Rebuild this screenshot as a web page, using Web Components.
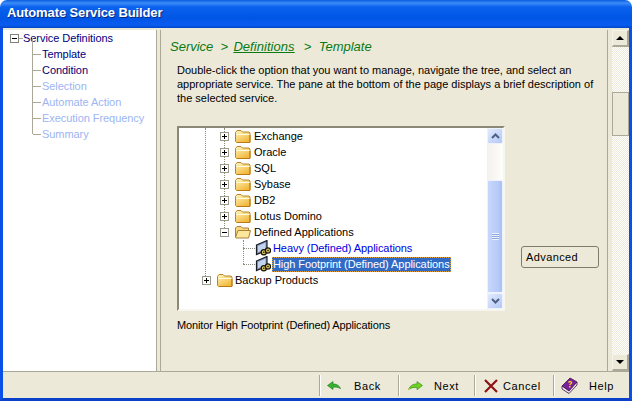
<!DOCTYPE html>
<html>
<head>
<meta charset="utf-8">
<title>Automate Service Builder</title>
<style>
  html, body { margin: 0; padding: 0; background: #fff; }
  body { width: 632px; height: 401px; overflow: hidden; font: 11px "Liberation Sans", Arial, sans-serif; }
</style>
</head>
<body>
<builder-window>
  <nav-tree slot="nav"></nav-tree>
  <wizard-pane slot="main"></wizard-pane>
  <tool-button slot="tools" icon="back" w="79" pad="7" gap="13">Back</tool-button>
  <tool-button slot="tools" icon="next" w="76" pad="9" gap="11">Next</tool-button>
  <tool-button slot="tools" icon="cancel" w="79" pad="9" gap="5">Cancel</tool-button>
  <tool-button slot="tools" icon="help" w="76" pad="7" gap="11">Help</tool-button>
</builder-window>

<script>
const ICONS = {
  back: `<svg width="14" height="10" viewBox="0 0 14 10"><path d="M6 .5 .5 4.500 6 8.500V6.300C8.500 5.800 11 6.300 13.500 7.500 12.500 4.800 9.500 2.800 6 3Z" fill="#35b52c" stroke="#1c6e1c" stroke-width=".6"/></svg>`,
  next: `<svg width="15" height="10" viewBox="0 0 15 10"><path d="M9 .5 14.500 4.500 9 8.800V6.600C6.500 6 3.500 6.600 .6 8.400 2 4.800 5 2.800 9 3Z" fill="#6ed21e" stroke="#2f7f1f" stroke-width=".6"/><path d="M.5 8.500 2 7.500" stroke="#e0c820" stroke-width="1.200"/></svg>`,
  cancel: `<svg width="14" height="14" viewBox="0 0 14 14"><path d="M1 1 13 13M13 1 1 13" stroke="#8e1414" stroke-width="2.200" fill="none"/></svg>`,
  help: `<svg width="17" height="17" viewBox="0 0 17 17"><path d="M1 9 9 1 16 5 8 14Z" fill="#7a1f9a" stroke="#3c1048" stroke-width=".8"/><path d="M1 9V12L8 16.500 16 8V5L8 14Z" fill="#e8e4f0" stroke="#3c1048" stroke-width=".8"/><path d="M7.500 5.500C8.500 4 11 4.500 10.500 6 10 7 9 7 8.800 8" stroke="#f4d21e" stroke-width="1.400" fill="none"/><rect x="8" y="9" width="1.500" height="1.500" fill="#f4d21e"/></svg>`,
  folder: `<svg width="16" height="14" viewBox="0 0 16 14"><defs><linearGradient id="f" x1="0" y1="0" x2=".6" y2="1"><stop offset="0" stop-color="#fff6c0"/><stop offset="1" stop-color="#f2b93c"/></linearGradient></defs><path d="M.5 12.500V3.500L2 1.500H6L7.500 3H14L15 4V12.500L14 13.500H1.500Z" fill="url(#f)" stroke="#b8862d"/><path d="M1.500 5.500H14.500" stroke="#fffbe0"/><path d="M2 13.500H15V6" stroke="#b97a14" fill="none"/></svg>`,
  folderOpen: `<svg width="16" height="14" viewBox="0 0 16 14"><path d="M.5 12.500V3L2 1.500H6L7.500 3H13.500V5" fill="#f7d67c" stroke="#a9813a"/><path d="M.5 12.500 3 5.500H15.500L13.500 13H1Z" fill="#fde79a" stroke="#a9813a"/></svg>`,
  app: `<svg width="16" height="16" viewBox="0 0 16 16"><path d="M1.500 5 12 .5V10L1.500 14.500Z" fill="#7f98bd" stroke="#1a1d24" stroke-width="1.200"/><path d="M3 6 10.500 2.800V9L3 12.200Z" fill="#c4d4ee"/><circle cx="8.800" cy="12.300" r="2.600" fill="#d8c060" stroke="#1a1708" stroke-width="1.200"/><circle cx="13" cy="10.500" r="2.600" fill="#d8c060" stroke="#1a1708" stroke-width="1.200"/><circle cx="8.800" cy="12.300" r=".8" fill="#1a1708"/><circle cx="13" cy="10.500" r=".8" fill="#1a1708"/></svg>`
};

class BuilderWindow extends HTMLElement {
  constructor() {
    super();
    this.attachShadow({ mode: "open" });
    this.shadowRoot.innerHTML = `
      <style>
        :host { display: flex; flex-direction: column; width: 632px; height: 401px; }
        .title {
          height: 28px; flex: none; box-sizing: border-box; padding: 0 7px 3px; display: flex; align-items: center;
          border-radius: 7px 7px 0 0; letter-spacing: -.12px;
          background: linear-gradient(180deg, #0a5ce0 0, #3c8cf8 3px, #0a62ee 7px, #0055e5 18px, #0a5cf0 25px, #0047c8 28px);
          color: #fff; font: bold 13px "Liberation Sans", Arial, sans-serif; text-shadow: 1px 1px 0 #0a2a80;
        }
        .frame { flex: 1; display: flex; flex-direction: column; min-height: 0; background: #ece9d8;
          border-left: 3px solid #0a50e8; border-right: 3px solid #0a50e8; border-bottom: 3px solid #0a3fc8; }
        .top { flex: 1; display: flex; min-height: 0; padding-top: 2px; border-bottom: 1px solid #aca899; }
        .tools { height: 26px; flex: none; display: flex; justify-content: flex-end; }
        ::slotted([slot=nav]) { flex: none; }
        ::slotted([slot=main]) { flex: 1; min-width: 0; }
      </style>
      <div class="title">Automate Service Builder</div>
      <div class="frame">
        <div class="top"><slot name="nav"></slot><slot name="main"></slot></div>
        <div class="tools"><slot name="tools"></slot></div>
      </div>`;
  }
}

class NavTree extends HTMLElement {
  constructor() {
    super();
    this.attachShadow({ mode: "open" });
    const items = [["Template", "#000080"], ["Condition", "#000078"], ["Selection", "#9db5f2"],
      ["Automate Action", "#9db5f2"], ["Execution Frequency", "#9db5f2"], ["Summary", "#9db5f2"]];
    this.shadowRoot.innerHTML = `
      <style>
        :host { display: block; width: 154px; box-sizing: border-box; background: #fff; border-right: 1px solid #aca899; }
        .row { height: 16px; display: flex; align-items: center; white-space: nowrap; letter-spacing: -.06px; }
        .root { padding: 0 0 0 7px; color: #000080; }
        .box { width: 7px; height: 7px; border: 1px solid #808080; position: relative; flex: none; }
        .box::after { content: ""; position: absolute; left: 1px; right: 1px; top: 3px; height: 1px; background: #000; }
        .dash { width: 4px; height: 1px; background: #aca899; flex: none; }
        .item { margin-left: 29px; padding-left: 10px; position: relative; }
        .item::before { content: ""; position: absolute; left: 0; top: -8px; height: 16px; width: 1px; background: #aca899; }
        .item::after { content: ""; position: absolute; left: 1px; top: 8px; width: 8px; height: 1px; background: #aca899; }
      </style>
      <div class="row root"><span class="box"></span><span class="dash"></span>Service Definitions</div>
      ${items.map(([t, c]) => `<div class="row item" style="color:${c}">${t}</div>`).join("")}`;
  }
}

class WizardPane extends HTMLElement {
  constructor() {
    super();
    this.attachShadow({ mode: "open" });
    this.shadowRoot.innerHTML = `
      <style>
        :host { display: flex; box-sizing: border-box; border-left: 1px solid #aca899; margin-left: 3px; background: #ece9d8; }
        .body { flex: 1; min-width: 0; box-sizing: border-box; padding: 0 0 0 16px; border-right: 1px solid #aca899; margin-right: 4px; color: #000; }
        .crumb { height: 16px; margin: 9px 0 0 -7px; font: italic 13px "Liberation Sans", Arial, sans-serif; color: #0a7a14; white-space: pre; }
        .crumb u { text-underline-offset: 1px; margin: 0 2px 0 -2px; letter-spacing: .05px; }
        p { margin: 8px 0 0; line-height: 14px; height: 42px; white-space: nowrap; }
        .mid { display: flex; align-items: flex-start; margin-top: 21px; gap: 16px; }
        .mid xp-button { margin-top: 120px; }
        .msg { margin-top: 7px; line-height: 14px; letter-spacing: -.13px; }
      </style>
      <div class="body">
        <div class="crumb">Service  &gt;  <u>Definitions</u>  &gt;  Template</div>
        <p>Double-click the option that you want to manage, navigate the tree, and select an<br>appropriate service. The pane at the bottom of the page displays a brief description of<br>the selected service.</p>
        <div class="mid"><service-tree></service-tree><xp-button>Advanced</xp-button></div>
        <div class="msg">Monitor High Footprint (Defined) Applications</div>
      </div>
      <page-scrollbar></page-scrollbar>`;
  }
}

class ServiceTree extends HTMLElement {
  constructor() {
    super();
    this.attachShadow({ mode: "open" });
    const rows = [
      ["Exchange", 1, "+", "folder"], ["Oracle", 1, "+", "folder"], ["SQL", 1, "+", "folder"], ["Sybase", 1, "+", "folder"],
      ["DB2", 1, "+", "folder"], ["Lotus Domino", 1, "+", "folder"], ["Defined Applications", 1, "-", "folderOpen"],
      ["Heavy (Defined) Applications", 2, "", "app"], ["High Footprint (Defined) Applications", 2, "", "app", true],
      ["Backup Products", 0, "+", "folder"]
    ];
    this.shadowRoot.innerHTML = `
      <style>
        :host { display: flex; flex: none; width: 328px; height: 185px; box-sizing: border-box; background: #fff;
          border: 2px solid #8c8878; border-right: 2px solid #f6f5ee; border-bottom: 2px solid #f6f5ee; border-top-color: #8c8878; }
        .rows { flex: 1; position: relative; overflow: hidden; }
        .row { height: 16px; display: flex; align-items: center; white-space: nowrap; color: #000; position: relative; box-sizing: border-box; }
        .row.l0 { padding-left: 23px; } .row.l1 { padding-left: 41px; } .row.l2 { padding-left: 76px; }
        .box { width: 7px; height: 7px; border: 1px solid #9c9a8c; background: #fff; position: relative; flex: none; margin-right: 6px; }
        .box::before { content: ""; position: absolute; left: 1px; right: 1px; top: 3px; height: 1px; background: #000; }
        .box.plus::after { content: ""; position: absolute; top: 1px; bottom: 1px; left: 3px; width: 1px; background: #000; }
        .row svg { flex: none; }
        .t { margin-left: 2px; padding: 0 1px; height: 15px; line-height: 15px; }
        .l0 .t { margin-left: 1px; }
        .l2 .t { color: #0000e0; margin-left: 1px; letter-spacing: -.07px; }
        .sel .t { background: #316ac5; color: #fff; outline: 1px dotted #e0a040; outline-offset: -1px; }
        .l2 { --x: 0; }
        .v { position: absolute; width: 0; border-left: 1px dotted #8c8a7c; }
        .h { position: absolute; height: 0; border-top: 1px dotted #8c8a7c; }
      </style>
      <div class="rows">
        <span class="v" style="left:26px;top:0;height:150px"></span>
        <span class="v" style="left:45px;top:0;height:104px"></span>
        <span class="v" style="left:64px;top:112px;height:24px"></span>
        <span class="h" style="left:64px;top:120px;width:12px"></span>
        <span class="h" style="left:64px;top:136px;width:12px"></span>
        ${rows.map(([t, lvl, ex, ic, sel]) => `
          <div class="row l${lvl} ${sel ? "sel" : ""}">
            ${ex ? `<span class="box ${ex === "+" ? "plus" : ""}"></span>` : ""}${ICONS[ic]}<span class="t">${t}</span>
          </div>`).join("")}
      </div>
      <mini-scrollbar></mini-scrollbar>`;
  }
}

class MiniScrollbar extends HTMLElement {
  constructor() {
    super();
    this.attachShadow({ mode: "open" });
    this.shadowRoot.innerHTML = `
      <style>
        :host { display: flex; flex-direction: column; flex: none; width: 16px; background: linear-gradient(90deg, #f3f1ec, #fdfdfa); }
        .b { height: 16px; flex: none; box-sizing: border-box; border: 1px solid #eef2fd; border-radius: 2px; background: linear-gradient(135deg, #e1eafe, #b4c8f6); display: flex; align-items: center; justify-content: center; }
        .gap { height: 36px; flex: none; }
        .thumb { flex: 1; box-sizing: border-box; border: 1px solid #eef2fd; border-radius: 2px; background: linear-gradient(90deg, #c8d6fb, #b6cbf9 70%, #a9bff0); display: flex; align-items: center; justify-content: center; }
        .thumb i { width: 7px; height: 7px; background: repeating-linear-gradient(180deg, #eef4fe 0 1px, #8ca6e0 1px 2px); }
      </style>
      <div class="b"><svg width="9" height="6" viewBox="0 0 9 6"><path d="M1 5 4.500 1.500 8 5" stroke="#4d6185" stroke-width="2" fill="none"/></svg></div>
      <div class="gap"></div>
      <div class="thumb"><i></i></div>
      <div class="b"><svg width="9" height="6" viewBox="0 0 9 6"><path d="M1 1 4.500 4.500 8 1" stroke="#4d6185" stroke-width="2" fill="none"/></svg></div>`;
  }
}

class PageScrollbar extends HTMLElement {
  constructor() {
    super();
    this.attachShadow({ mode: "open" });
    this.shadowRoot.innerHTML = `
      <style>
        :host { display: flex; flex-direction: column; flex: none; width: 17px; background: repeating-conic-gradient(#ece9d8 0 25%, #fff 0 50%) 0 0 / 2px 2px; }
        .b { height: 17px; flex: none; box-sizing: border-box; background: #ece9d8; border: 2px solid #aca899; border-top-width: 1px; border-left-width: 1px; border-color: #f5f4ec #aca899 #aca899 #f5f4ec; display: flex; align-items: center; justify-content: center; }
        .thumb { height: 44px; margin-top: 45px; flex: none; box-sizing: border-box; background: #ece9d8; border: 1px solid #aca899; }
        .sp { flex: 1; }
        i { width: 0; height: 0; border: 4px solid transparent; border-top: 0; border-bottom: 4px solid #000; }
        i.d { border-bottom: 0; border-top: 4px solid #000; }
      </style>
      <div class="b"><i></i></div><div class="thumb"></div><div class="sp"></div><div class="b"><i class="d"></i></div>`;
  }
}

class XpButton extends HTMLElement {
  constructor() {
    super();
    this.attachShadow({ mode: "open" });
    this.shadowRoot.innerHTML = `
      <style>
        :host { display: flex; align-items: center; width: 78px; height: 22px; box-sizing: border-box; padding-left: 4px; letter-spacing: .4px;
          border: 1px solid #7f7c6c; border-radius: 3px; background: #ece9d8; color: #000; }
      </style><slot></slot>`;
  }
}

class ToolButton extends HTMLElement {
  constructor() {
    super();
    this.attachShadow({ mode: "open" });
    const w = this.getAttribute("w"), pad = this.getAttribute("pad"), gap = this.getAttribute("gap");
    this.shadowRoot.innerHTML = `
      <style>
        :host { display: flex; align-items: center; box-sizing: border-box; width: ${w}px; padding-left: ${pad}px; gap: ${gap}px;
          border-left: 1px solid #aca899; box-shadow: inset 1px 0 0 #fff; margin: 3px 0 2px; color: #000; letter-spacing: .6px; }
        svg { display: block; }
      </style>${ICONS[this.getAttribute("icon")]}<slot></slot>`;
  }
}

customElements.define("builder-window", BuilderWindow);
customElements.define("nav-tree", NavTree);
customElements.define("wizard-pane", WizardPane);
customElements.define("service-tree", ServiceTree);
customElements.define("mini-scrollbar", MiniScrollbar);
customElements.define("page-scrollbar", PageScrollbar);
customElements.define("xp-button", XpButton);
customElements.define("tool-button", ToolButton);
</script>
</body>
</html>
